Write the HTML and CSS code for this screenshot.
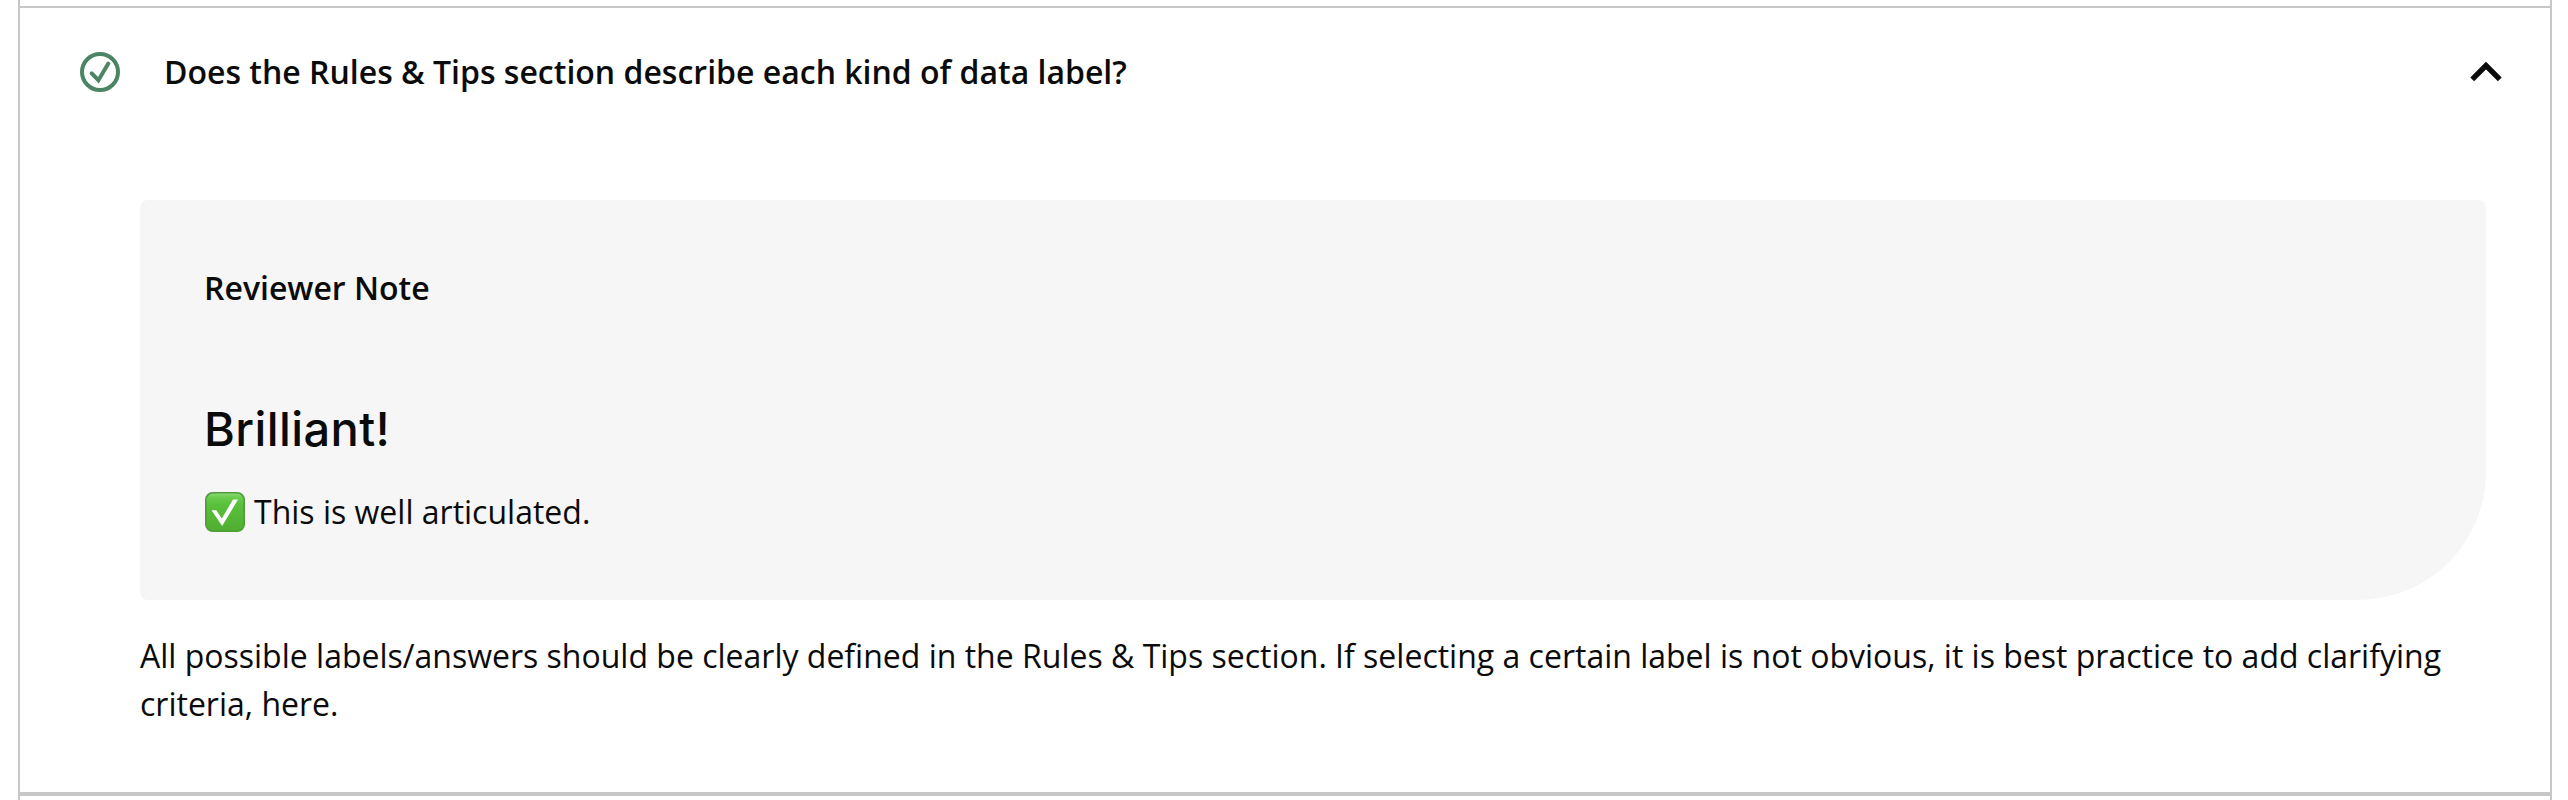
FILE: index.html
```html
<!DOCTYPE html>
<html lang="en">
<head>
<meta charset="utf-8">
<title>Review</title>
<link rel="stylesheet" href="styles.css">
</head>
<body>
<main class="rubric">
  <section class="item">
    <header class="item-header">
      <svg class="status" viewBox="0 0 40 40" aria-hidden="true"><circle cx="20" cy="20" r="18"/><path d="M11.7 21.3 18.4 28.2 28.3 11.6"/></svg>
      <h2 class="title">Does the Rules &amp; Tips section describe each kind of data label?</h2>
      <svg class="chevron" viewBox="0 0 32 20" aria-hidden="true"><path d="M2.2 17.3 16 3.5 29.8 17.3"/></svg>
    </header>
    <div class="item-body">
      <div class="note">
        <h3 class="note-title">Reviewer Note</h3>
        <p class="verdict">Brilliant!</p>
        <p class="comment">
          <svg class="emoji" viewBox="0 0 40 40" aria-hidden="true">
            <defs>
              <linearGradient id="face" x1="0" y1="0" x2="0" y2="1"><stop offset="0" stop-color="#8edc78"/><stop offset=".12" stop-color="#6bcc4e"/><stop offset=".3" stop-color="#59c13b"/><stop offset="1" stop-color="#50ad31"/></linearGradient>
              <linearGradient id="rim" x1="0" y1="0" x2="0" y2="1"><stop offset="0" stop-color="#4f983d"/><stop offset="1" stop-color="#4ca035"/></linearGradient>
            </defs>
            <rect x=".8" y=".8" width="38.4" height="38.4" rx="7" fill="url(#face)" stroke="url(#rim)" stroke-width="1.6"/>
            <path d="M6.5 18.2H11.3L16.8 26.5 28 7.6H33L17.2 34Z" fill="#fff"/>
          </svg>
          <span>This is well articulated.</span>
        </p>
      </div>
      <p class="description">All possible labels/answers should be clearly defined in the Rules &amp; Tips section. If selecting a certain label is not obvious, it is best practice to add clarifying criteria, here.</p>
    </div>
  </section>
</main>
</body>
</html>
```
FILE: styles.css
```css
* { box-sizing: border-box; }
body {
  margin: 0;
  background: #fff;
  color: #0b0b0b;
  font: 400 32px/48px "Open Sans", sans-serif;
}
h2, h3, p { margin: 0; }
.rubric {
  height: 800px;
  margin: 0 16px 0 18px;
  padding-top: 6px;
  border: solid #c7c7c7;
  border-width: 0 2px;
}
.item {
  height: 790px;
  border-top: 2px solid #c7c7c7;
  border-bottom: 4px solid #c7c7c7;
}
.item-header {
  display: flex;
  align-items: center;
  height: 128px;
  padding: 0 48px 0 60px;
}
.status { width: 40px; height: 40px; margin-right: 44px; }
.status circle, .status path { fill: none; stroke: #4c8564; stroke-width: 4; }
.status path { stroke-linecap: round; }
.title, .note-title { font-size: 32px; font-weight: 600; }
.title { flex: 1; }
.chevron { width: 32px; height: 20px; }
.chevron path { fill: none; stroke: #0b0b0b; stroke-width: 5.4; }
.item-body { padding: 64px 64px 0 120px; }
.note {
  height: 400px;
  padding: 64px;
  background: #f6f6f6;
  border-radius: 8px 8px 128px 8px;
}
.verdict {
  margin-top: 85px;
  font: 500 47px/64px Inter, sans-serif;
  letter-spacing: .4px;
}
.comment { display: flex; gap: 9px; margin-top: 27px; }
.emoji { width: 40px; height: 40px; margin: 4px 0 0 1px; }
.description { margin-top: 32px; }
```
